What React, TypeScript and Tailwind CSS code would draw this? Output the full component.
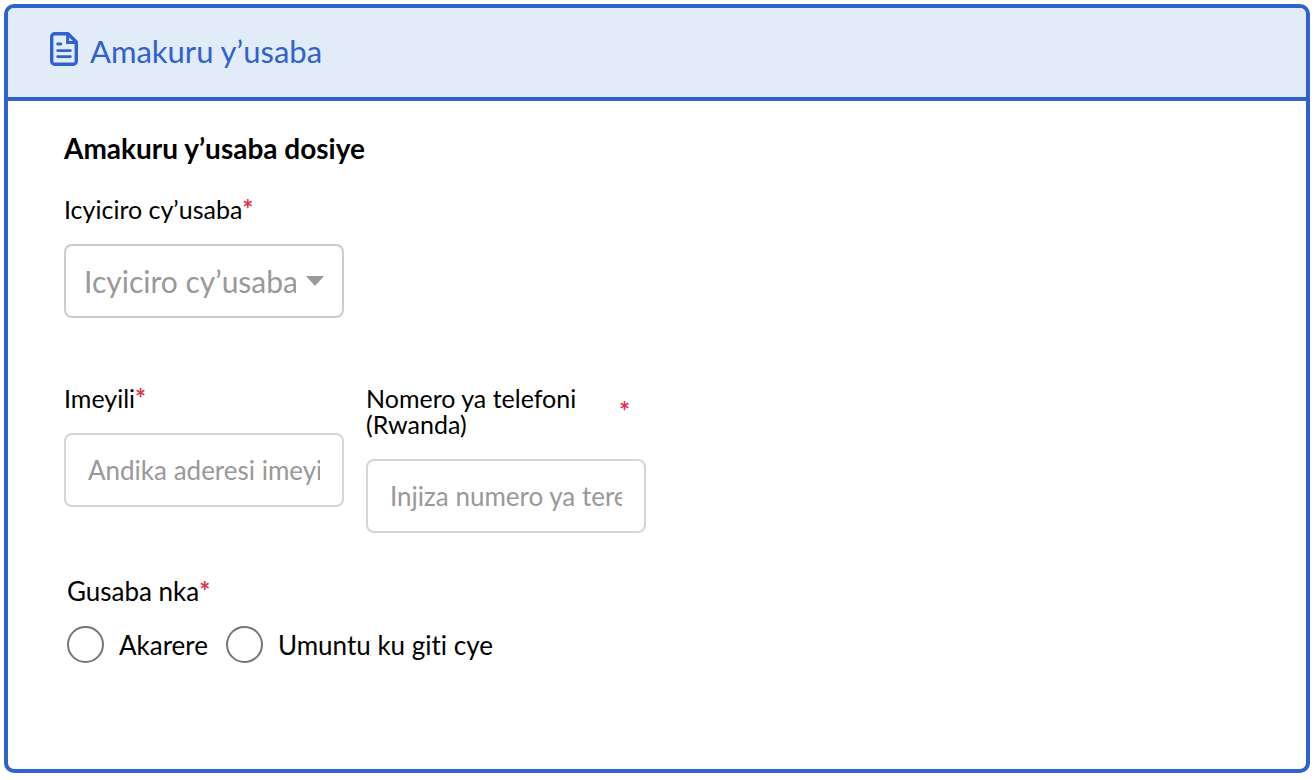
import type { ReactNode } from "react";

function Required() {
  return <span className="text-[26px] font-bold text-[#e5304f]">*</span>;
}

function Field({ id, label, spread = false, children }: { id: string; label: string; spread?: boolean; children: ReactNode }) {
  return (
    <div className="w-70">
      <label htmlFor={id} className={spread ? "flex items-center justify-between pr-4" : "flex"}>
        <span className={spread ? "w-56" : ""}>{label}</span>
        <Required />
      </label>
      <div className="mt-[22px]">{children}</div>
    </div>
  );
}

function DocumentIcon() {
  return (
    <svg width="28" height="34" viewBox="0 0 28 34" fill="none" stroke="currentColor" strokeWidth="3.4" strokeLinejoin="round" strokeLinecap="round" aria-hidden="true">
      <path d="M4.7 1.7H18L26.3 10V29.3A3 3 0 0 1 23.3 32.3H4.7A3 3 0 0 1 1.7 29.3V4.7A3 3 0 0 1 4.7 1.7Z" />
      <path d="M17.6 2V10.4H26" strokeWidth="3" strokeLinejoin="miter" />
      <path d="M7.6 12H10.8M7.6 18.6H20.4M7.6 24.6H20.4" strokeWidth="2.8" />
    </svg>
  );
}

export default function App() {
  return (
    <main className="min-h-screen bg-white p-1 pr-1.5 font-['Lato',sans-serif] text-[25px] leading-[26px] text-black [font-variant-ligatures:none]">
      <section className="overflow-hidden rounded-[10px] border-4 border-[#3062cf]">
        <header className="flex items-start gap-3 border-b-4 border-[#3062cf] bg-[#e2ecf8] px-[42px] pt-6 pb-[27px] text-[#3062cf]">
          <DocumentIcon />
          <h1 className="text-[31px] leading-[38px]">Amakuru y’usaba</h1>
        </header>
        <form className="px-14 pt-[31px] pb-[106px]">
          <h2 className="text-[28px] leading-8 font-bold">Amakuru y’usaba dosiye</h2>
          <div className="mt-8">
            <Field id="category" label="Icyiciro cy’usaba">
              <div className="relative">
                <select
                  id="category"
                  defaultValue=""
                  className="h-[74px] w-full appearance-none rounded-lg border-2 border-[#cccccc] bg-white pr-[46px] pl-[18px] text-[30px] leading-10 text-[#999999]"
                >
                  <option value="">Icyiciro cy’usaba</option>
                </select>
                <svg width="18" height="10" viewBox="0 0 18 10" className="pointer-events-none absolute top-8 right-5 fill-[#999999]" aria-hidden="true">
                  <path d="M0 0H18L9 10Z" />
                </svg>
              </div>
            </Field>
          </div>
          <div className="mt-[67px] flex flex-wrap items-start gap-[22px]">
            <Field id="email" label="Imeyili">
              <input
                id="email"
                type="email"
                placeholder="Andika aderesi imeyili"
                className="h-[74px] w-full rounded-lg border-2 border-[#d1d5db] bg-white px-[22px] text-[26px] placeholder:text-[#999999]"
              />
            </Field>
            <Field id="phone" label="Nomero ya telefoni (Rwanda)" spread>
              <input
                id="phone"
                type="tel"
                placeholder="Injiza numero ya terefone"
                className="h-[74px] w-full rounded-lg border-2 border-[#d1d5db] bg-white px-[22px] text-[26px] placeholder:text-[#999999]"
              />
            </Field>
          </div>
          <fieldset className="mt-[45px] px-[3px]">
            <legend className="text-[26px]">
              Gusaba nka
              <Required />
            </legend>
            <div className="mt-[22px] flex flex-wrap items-center gap-[18px] text-[26px]">
              <label className="flex items-center gap-[15px]">
                <input type="radio" name="applicant" className="size-[37px] shrink-0 appearance-none rounded-full border-2 border-[#767676] checked:border-[10px] checked:border-[#3062cf]" />
                Akarere
              </label>
              <label className="flex items-center gap-[15px]">
                <input type="radio" name="applicant" className="size-[37px] shrink-0 appearance-none rounded-full border-2 border-[#767676] checked:border-[10px] checked:border-[#3062cf]" />
                Umuntu ku giti cye
              </label>
            </div>
          </fieldset>
        </form>
      </section>
    </main>
  );
}
